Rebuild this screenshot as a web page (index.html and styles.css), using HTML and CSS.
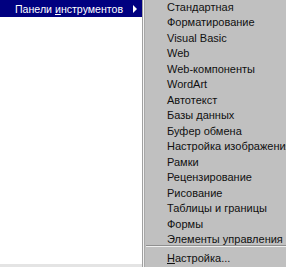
FILE: index.html
```html
<!DOCTYPE html>
<html lang="ru">
<head>
  <meta charset="UTF-8" />
  <title>Панели инструментов</title>
  <link rel="stylesheet" href="styles.css">
</head>
<body>

<div class="screen">
  <div class="menu">
    <div class="menu-item active">
      <span>Панели <u>и</u>нструментов</span>
      <span class="arrow"></span>
    </div>
    <div class="menu-rest"></div>
  </div>

  <div class="submenu">
    <div class="sub-item">Стандартная</div>
    <div class="sub-item">Форматирование</div>
    <div class="sub-item">Visual Basic</div>
    <div class="sub-item">Web</div>
    <div class="sub-item">Web-компоненты</div>
    <div class="sub-item">WordArt</div>
    <div class="sub-item">Автотекст</div>
    <div class="sub-item">Базы данных</div>
    <div class="sub-item">Буфер обмена</div>
    <div class="sub-item">Настройка изображения</div>
    <div class="sub-item">Рамки</div>
    <div class="sub-item">Рецензирование</div>
    <div class="sub-item">Рисование</div>
    <div class="sub-item">Таблицы и границы</div>
    <div class="sub-item">Формы</div>
    <div class="sub-item">Элементы управления</div>
    <div class="separator"></div>
    <div class="sub-item"><u>Н</u>астройка...</div>
  </div>
</div>

</body>
</html>
```

FILE: styles.css
```css
body {
  margin: 0;
  font-family: "Liberation Sans", Arial, sans-serif;
  font-size: 11px;
  background: #c0c0c0;
}
.screen {
  display: flex;
  width: 286px;
  height: 267px;
  overflow: hidden;
}
.menu {
  width: 142px;
  display: flex;
  flex-direction: column;
  background: white;
  border-right: 1px solid #a0a0a0;
  flex-shrink: 0;
}
.menu-item {
  display: flex;
  align-items: center;
  justify-content: space-between;
  height: 17px;
  padding: 0 5px 0 15px;
  font-size: 10.6px;
}
.menu-item.active {
  background-color: #000080;
  color: white;
}
.arrow {
  width: 0;
  height: 0;
  border-top: 4px solid transparent;
  border-bottom: 4px solid transparent;
  border-left: 4px solid white;
}
.menu-rest {
  flex: 1;
  border-bottom: 3px solid #e4e4e4;
}
.submenu {
  flex: 1;
  padding: 0 0 0 23px;
  border-left: 1px solid #f4f4f4;
  box-shadow: inset 1px 0 0 #a8a8a8;
  background: #c0c0c0;
  white-space: nowrap;
  color: #101010;
}
.sub-item {
  height: 15.47px;
  line-height: 15.47px;
}
.separator {
  margin: -3px 0 4px -21px;
  border-top: 1px solid #909090;
  border-bottom: 1px solid #f0f0f0;
}
```
